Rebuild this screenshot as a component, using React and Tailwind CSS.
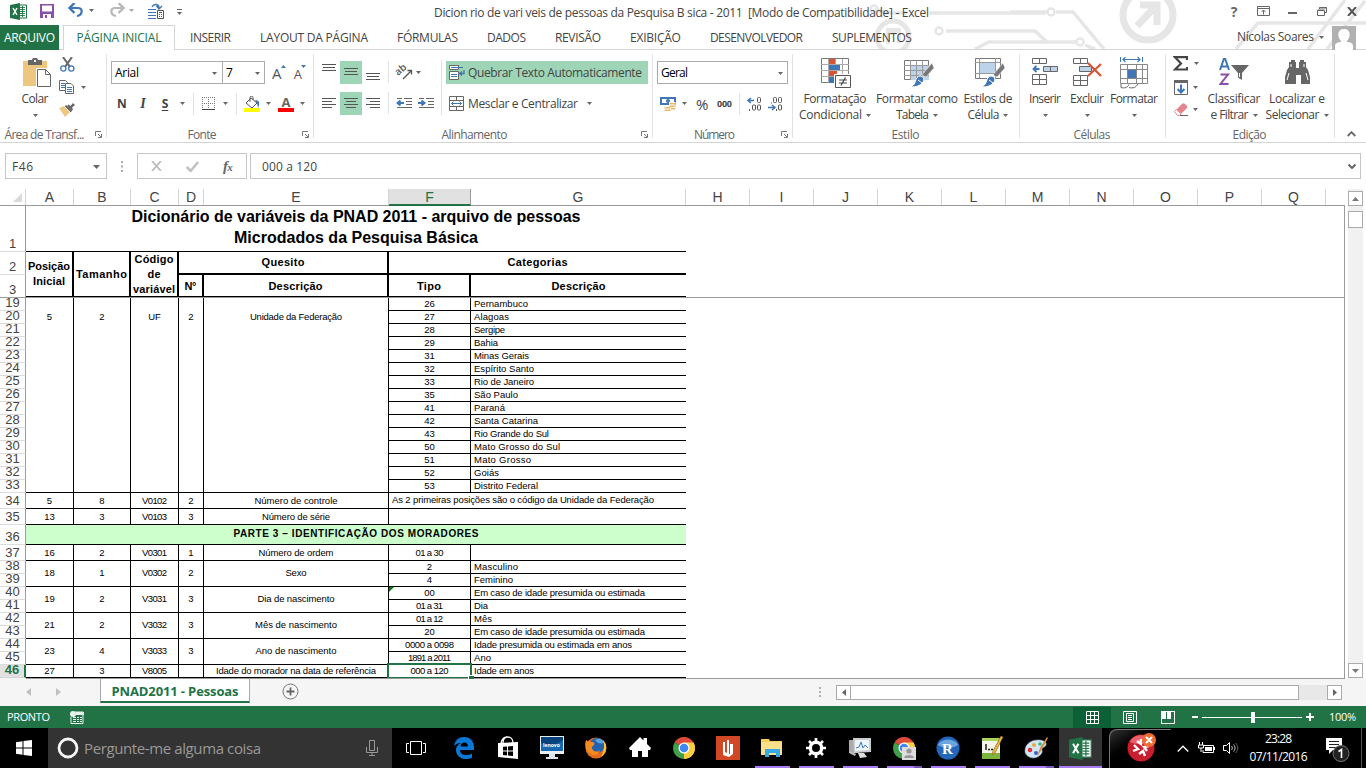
import React, { useLayoutEffect, useRef, useState } from "react";

/* Text set to a given line width by spacing its letters. */
function Fit({ w, className = "", children }) {
  const ref = useRef(null);
  const [ls, setLs] = useState(0);
  useLayoutEffect(() => {
    const n = String(children).length;
    if (n > 1) setLs((w - ref.current.getBoundingClientRect().width) / (n - 1));
  }, [w, children]);
  return (
    <span ref={ref} className={"inline-block whitespace-pre " + className} style={{ letterSpacing: ls + "px", marginRight: -ls + "px" }}>
      {children}
    </span>
  );
}

const Svg = ({ w, h, className = "", children }) => (
  <svg width={w} height={h} viewBox={`0 0 ${w} ${h}`} fill="none" className={"block shrink-0 " + className}>
    {children}
  </svg>
);

const Ar = ({ className = "", c = "#666" }) => (
  <Svg w={5} h={3} className={className}><path d="M0 0h5L2.500 3z" fill={c} /></Svg>
);

const VSep = ({ className = "" }) => <div className={"w-px shrink-0 bg-[#e1e1e1] " + className} />;

const Launcher = () => (
  <Svg w={7} h={7}><path d="M.5 5V.5H6M3 3l3 3M6.500 3v3.500H3" stroke="#777" /></Svg>
);

function Group({ width, label, lw, launch, center = "", children }) {
  return (
    <div className={"flex h-[92px] shrink-0 " + width}>
      <div className="flex min-w-0 flex-1 flex-col">
        <div className="flex h-[76px]">{children}</div>
        <div className="flex h-[16px] items-center">
          <div className={"flex-1 pt-px text-center text-[#666] " + center}><Fit w={lw}>{label}</Fit></div>
          <div className="w-[11px] pt-px">{launch && <Launcher />}</div>
        </div>
      </div>
      <VSep className="mt-1 h-[84px]" />
    </div>
  );
}

function Big({ width, icon, l1, w1, l2, w2, className = "" }) {
  return (
    <div className={"flex shrink-0 flex-col items-center pt-2 " + width + " " + className}>
      <div className="flex h-[33px] items-start justify-center">{icon}</div>
      <div className="h-4 leading-4"><Fit w={w1}>{l1}</Fit></div>
      <div className="flex h-4 items-center gap-1 leading-4">
        {l2 && <Fit w={w2}>{l2}</Fit>}
        <Ar />
      </div>
    </div>
  );
}

/* ---------- ribbon icons ---------- */
const XlIcon = ({ w = 17, h = 17 }) => (
  <svg width={w} height={h} viewBox="0 0 17 17" className="block shrink-0">
    <path d="M9 2h7.500v13H9z" fill="#fff" stroke="#217346" />
    <path d="M10 4.500h5M10 6.500h5M10 8.500h5M10 10.500h5M10 12.500h5M12.500 3v11" stroke="#217346" strokeWidth=".9" />
    <path d="M0 2 10 0v17L0 15z" fill="#217346" />
    <path d="M3 5l4 7M7 5l-4 7" stroke="#fff" strokeWidth="1.500" />
  </svg>
);
const Save = () => (
  <Svg w={14} h={14}><path d="M0 0h14v14H0z" fill="#8a4fa8" /><path d="M2 1.500h10v6H2zM3 10h8v4H3z" fill="#fff" /><path d="M5 11h2v3H5z" fill="#8a4fa8" /></Svg>
);
const Undo = ({ c, flip }) => (
  <Svg w={16} h={14} className={flip ? "-scale-x-100" : ""}><path d="M2 5h8c5 0 5 7-1 8" stroke={c} strokeWidth="2.200" /><path d="M6.500 0 1.500 5l5 5" stroke={c} strokeWidth="2.400" /></Svg>
);
const CalcQ = () => (
  <Svg w={16} h={16}><path d="M0 6.500h8M0 9.500h8M0 12.500h8M0 15.500h8" stroke="#3f76b5" /><path d="M4 4c2-4 7-3 7 1M8.500 3 11 6l3-3" stroke="#3f76b5" strokeWidth="1.400" /><path d="M9.500 7.500h6v8h-6z" stroke="#555" fill="#fff" /><path d="M11 9.500h3M11 11.500h1m1 0h1M11 13.500h1m1 0h1" stroke="#555" /></Svg>
);
const Paste = () => (
  <Svg w={29} h={30}><path d="M0 3h24v25H0z" fill="#edc77f" /><path d="M5 2h4c0-3 6-3 6 0h4v5H5z" fill="#666" /><path d="M11 2h2v2h-2z" fill="#fff" /><path d="M13 10h10l6 6v14H13z" fill="#fff" /><path d="M14.500 11.500h8l5 5v12h-13zM22.500 11.500v5h5" stroke="#666" fill="#fff" /></Svg>
);
const Cut = () => (
  <Svg w={15} h={15}><path d="M3 0l7 10M12 0L5 10" stroke="#666" strokeWidth="2" /><circle cx="3.300" cy="11.500" r="2.600" stroke="#3f76b5" strokeWidth="1.300" /><circle cx="11.300" cy="11.500" r="2.600" stroke="#3f76b5" strokeWidth="1.300" /></Svg>
);
const Copy = () => (
  <Svg w={16} h={14}><path d="M.5.5h6l2 2v8h-8z" stroke="#666" fill="#fff" /><path d="M2 3.500h4M2 5.500h4M2 7.500h4" stroke="#3f76b5" /><path d="M6.500 3.500h5.500l2.500 2.500v7.500h-8z" stroke="#666" fill="#fff" /><path d="M8 7.500h5M8 9.500h5M8 11.500h5" stroke="#3f76b5" /></Svg>
);
const Brush = () => (
  <Svg w={16} h={15}><path d="M0 6l5-2 6 6-5 5z" fill="#edc77f" /><path d="M5.500 4.500 7 3l6 6-1.500 1.500z" fill="#666" /><path d="M8 4 9.500 2.500l2 1.500L14 1l2 2-3 2.500 1 2L12.500 9z" fill="#666" /><path d="M5 4l6.500 6.500" stroke="#fff" strokeWidth=".8" /></Svg>
);
const Lines = ({ rows, h = 14 }) => (
  <Svg w={14} h={h}>{rows.map(([x, y, l], i) => <path key={i} d={`M${x} ${y + 0.5}h${l}`} stroke="#555" />)}</Svg>
);
const Indent = ({ right }) => (
  <Svg w={16} h={11}><path d="M8 .5h8M10 3.500h6M10 6.500h6M1 .5h5M1 9.500h15" stroke="#666" />{right ? <path d="M0 5h6M3.500 2.500 6.500 5 3.500 7.500" stroke="#3f76b5" strokeWidth="2" /> : <path d="M2 5h6M4.500 2.500 1.500 5l3 2.500" stroke="#3f76b5" strokeWidth="2" />}</Svg>
);
const Wrap = () => (
  <Svg w={16} h={16}><path d="M.5.5h9v4h-9zM.5 6.500h9v8h-9z" stroke="#666" fill="#fff" /><path d="M2 2.500h12M2 9.500h6M2 11.500h6" stroke="#3f76b5" /><path d="M15 5v3.500h-4M13 6.500l-2.500 2 2.500 2" stroke="#3f76b5" strokeWidth="1.300" /></Svg>
);
const Merge = () => (
  <Svg w={15} h={15}><path d="M.5.5h14v14H.5zM.5 4.500h14M.5 10.500h14M7.500.5v4M7.500 10.500v4" stroke="#666" /><path d="M2.500 7.500h10M4.500 5.500l-2 2 2 2M10.500 5.500l2 2-2 2" stroke="#3f76b5" /></Svg>
);
const BordersI = () => (
  <Svg w={13} h={13}><path d="M0 .5h13M0 6.500h13M.5 0v12M6.500 0v12M12.500 0v12" stroke="#777" strokeDasharray="1 1" /><path d="M0 12.500h13" stroke="#444" /></Svg>
);
const Bucket = () => (
  <Svg w={16} h={16}><path d="M2 7l5-5 6 5-5 5z" stroke="#555" fill="#fff" /><path d="M6 6V1.500C6-.2 9-.2 9 1.500V4" stroke="#555" /><path d="M11 4c5 0 5 4 3 8l-1-5z" fill="#3f76b5" /><path d="M0 12h16v4H0z" fill="#ff0" /></Svg>
);
const Money = () => (
  <Svg w={16} h={16}><path d="M0 1h16v8H0z" fill="#3f76b5" /><path d="M2 3h12v4H2z" fill="#fff" /><circle cx="8" cy="5" r="2" fill="#3f76b5" /><path d="M9 6h6.500v8H9zM4 10h7v6H4z" fill="#fff" /><path d="M9.500 7h6v1.500h-6zM9.500 9.500h6V11h-6zM11 12h4.500v1.500H11zM4.500 11h6v1.500h-6zM4.500 13.500h6V15h-6z" fill="#e9b767" /></Svg>
);
const Dec = ({ less }) => (
  <Svg w={16} h={14}>
    {less ? <path d="M0 10.500h6M4 8l3 2.500L4 13" stroke="#3f76b5" strokeWidth="1.500" /> : <path d="M1 3.500h6M4 1 1 3.500 4 6" stroke="#3f76b5" strokeWidth="1.500" />}
    {less && <path d="M3.500 6.500v-1" stroke="#555" />}
    {less && <rect x="5.500" y=".5" width="3" height="5" rx="1" stroke="#555" />}
    <rect x="10.500" y=".5" width="3" height="5" rx="1" stroke="#555" />
    {!less && <rect x="5.500" y="8" width="3" height="5" rx="1" stroke="#555" />}
    <rect x="10.500" y="8" width="3" height="5" rx="1" stroke="#555" />
    <path d={less ? "M8.500 12v2" : "M2.500 12v2"} stroke="#555" />
  </Svg>
);
const CondFmt = () => (
  <Svg w={30} h={30}><path d="M.5.5h27v24H.5z" fill="#fff" stroke="#777" /><path d="M7.500 1v24M14.500 1v24M21.500 1v24M0 6.500h28M0 12.500h28M0 18.500h28" stroke="#aaa" /><path d="M8 1h6v5H8zM8 13h8v5H8z" fill="#d65532" /><path d="M8 7h11v5H8zM8 19h6v6H8z" fill="#3f76b5" /><path d="M13 16h17v14H13z" fill="#fff" /><path d="M14.500 17.500h15v12h-15z" fill="#fff" stroke="#555" /><path d="M18 22h8M18 25h8M24.500 19.500l-4.500 8" stroke="#444" strokeWidth="1.200" /></Svg>
);
const TableFmt = () => (
  <Svg w={30} h={30}><path d="M.5 2.500h24v19H.5z" fill="#fff" stroke="#777" /><path d="M7 8h18v14H7z" fill="#bcd3ea" /><path d="M6.500 2v20M12.500 2v20M18.500 2v20M0 7.500h25M0 12.500h25M0 17.500h25" stroke="#999" /><path d="M28 5l2 5-8 9-4-2z" fill="#777" stroke="#fff" strokeWidth=".5" /><path d="M16 18c3 0 5 3 3 6-3 4-7 5-12 5 3-2 4-4 4.500-6s2-5 4.500-5z" fill="#3f76b5" stroke="#fff" /><path d="M14 22l4 3" stroke="#fff" /></Svg>
);
const CellSty = () => (
  <Svg w={30} h={30}><path d="M.5.5h25v20H.5z" fill="#fff" stroke="#777" /><path d="M5 5h15v10H5z" fill="#bcd3ea" /><path d="M4.500 0v20M20.500 0v20M0 4.500h26M0 15.500h26" stroke="#999" /><path d="M28 5l2 5-8 9-4-2z" fill="#777" stroke="#fff" strokeWidth=".5" /><path d="M16 18c3 0 5 3 3 6-3 4-7 5-12 5 3-2 4-4 4.500-6s2-5 4.500-5z" fill="#3f76b5" stroke="#fff" /><path d="M14 22l4 3" stroke="#fff" /></Svg>
);
const Ins = () => (
  <Svg w={27} h={28}><path d="M.5.500h14v5H.5zM7.500.5v5M.5 16.500h14v10H.5zM7.500 16.500v10M.5 21.500h14" stroke="#666" /><path d="M11.500 8.500h14v5h-14zM18.500 8.500v5" stroke="#666" fill="#bcd3ea" /><path d="M1.500 11h6M4.500 8l-3 3 3 3" stroke="#3f76b5" strokeWidth="1.800" /></Svg>
);
const Del = () => (
  <Svg w={29} h={28}><path d="M.5.500h14v5H.5zM7.500.5v5M.5 17.500h14v10H.5zM7.500 17.500v10M.5 22.500h14" stroke="#666" /><path d="M6.500 8.500h12v5h-12z" stroke="#666" fill="#bcd3ea" /><path d="M15 5l13 13M28 6L15 18" stroke="#d65532" strokeWidth="2.200" /></Svg>
);
const FmtI = () => (
  <Svg w={28} h={32}><path d="M.5 0v5M22.500 0v5" stroke="#3f76b5" /><path d="M3 2.500h17M5.500 0 3 2.500 5.500 5M17.500 0 20 2.500 17.500 5" stroke="#3f76b5" strokeWidth="1.200" /><path d="M.5 7.500h27v19H.5zM7.500 7v20M16.500 7v20M22.500 7v20M0 12.500h28M0 21.500h28" stroke="#888" /><path d="M8 13h8v8H8z" fill="#3f76b5" /><path d="M1 27v3.500c3 1 7 0 8-3M9 30.500c4 1 7 0 9-3.500" stroke="#666" /></Svg>
);
const SumI = () => <Svg w={15} h={15}><path d="M14 4V1.200H2L8 7.500 2 13.500h12.200V11" stroke="#444" strokeWidth="2.200" /></Svg>;
const FillI = () => <Svg w={14} h={15}><path d="M.5.5h13v14H.5z" stroke="#666" fill="#fff" /><path d="M0 0h14v3H0z" fill="#666" /><path d="M7 4.500v8M3.500 9 7 12.500 10.500 9" stroke="#3f76b5" strokeWidth="2" /></Svg>;
const Eraser = () => <Svg w={15} h={13}><path d="M2.500 6.500 8 1c1-1 2-1 3 0l1.500 1.500c1 1 1 2 0 3L7.500 10.500z" fill="#e5848f" /><path d="M.5 8.500 2.500 6.500l4.500 4.500-1.500 1.500h-2z" fill="#fff" stroke="#e5848f" /><path d="M6 12.500h8" stroke="#666" /></Svg>;
const SortI = () => (
  <Svg w={30} h={28}><path d="M1 12 4.800 1h1.400L10 12M2.500 8.500h6" stroke="#3f76b5" strokeWidth="2" /><path d="M1.500 16.500h7.500L1.500 26h8" stroke="#8a4fa8" strokeWidth="2" /><path d="M12 7h18l-7 8v7l-4-2.500V15z" fill="#666" /><path d="M20.500 15v4" stroke="#fff" /></Svg>
);
const Binoc = () => (
  <Svg w={27} h={25}><path d="M5 2h2V0h4v2h1v6h3V2h1V0h4v2h2v5l2 3 2 7v7h-9v-9h-5v9H1v-7l2-7 2-3z" fill="#666" /><path d="M7 4v3M22 13l2 7M3 20l2-7M20 4v3" stroke="#fff" strokeWidth="1" /></Svg>
);

/* ---------- title bar and tabs ---------- */
function Circuit() {
  return (
    <svg width="496" height="49" viewBox="870 0 496 49" fill="none" stroke="#e6e6e6" className="absolute top-0 right-0">
      <path d="M929 13h116M875 9l12 4h20M1056 12h17l31 37M1010 12h40M946 31h89l12 11h33M975 49l14-7h88M1085 45l10 4" strokeWidth="3.500" />
      <circle cx="939" cy="31" r="3.500" strokeWidth="2.500" fill="#fff" />
      <circle cx="874" cy="9" r="3.500" strokeWidth="2.500" />
      <circle cx="1051" cy="12" r="3.500" strokeWidth="2.500" fill="#fff" />
      <circle cx="1080" cy="42" r="3.500" strokeWidth="2.500" fill="#fff" />
      <circle cx="893" cy="37" r="16" strokeWidth="5" />
      <path d="M886 30h13v13M888 44v-11h8" strokeWidth="4" />
      <circle cx="1148" cy="15" r="25" strokeWidth="7" />
      <path d="M1137 26l18-19M1140 5h17v20" strokeWidth="7" />
      <path d="M1236 49l22-26h108M1308 49l37-49M1327 49l38-48" strokeWidth="3.500" />
    </svg>
  );
}

const tabs = [["INSERIR", 41], ["LAYOUT DA PÁGINA", 108], ["FÓRMULAS", 61], ["DADOS", 39], ["REVISÃO", 46], ["EXIBIÇÃO", 51], ["DESENVOLVEDOR", 93], ["SUPLEMENTOS", 80]];

function Header() {
  return (
    <header className="relative h-[50px] bg-white">
      <Circuit />
      <div className="relative flex h-[25px] items-center">
        <div className="flex h-full w-[434px] items-start pt-[3px] pl-[10px]">
          <XlIcon />
          <div className="mt-px ml-[13px]"><Save /></div>
          <div className="ml-[14px]"><Undo c="#3f76b5" /></div>
          <Ar className="mt-[6px] ml-[5px]" />
          <div className="ml-[15px]"><Undo c="#b8b8b8" flip /></div>
          <Ar className="mt-[6px] ml-[4px]" c="#aaa" />
          <div className="ml-[14px]"><CalcQ /></div>
          <Svg w={5} h={6} className="mt-[6px] ml-[13px]"><path d="M0 .5h5" stroke="#666" /><path d="M0 3h5L2.500 6z" fill="#666" /></Svg>
        </div>
        <Fit w={495} className="pt-px text-[#444]">{"Dicion rio de vari veis de pessoas da Pesquisa B sica - 2011  [Modo de Compatibilidade] - Excel"}</Fit>
        <div className="ml-auto flex h-full items-start pt-[5px] pr-[9px] text-[#666]">
          <span className="w-2 text-center text-[14px] leading-[13px] font-bold">?</span>
          <Svg w={13} h={10} className="mt-px ml-[19px]"><path d="M.5.5h12v9H.5zM.5 2.500h12M6.500 8.500v-4M4.500 6l2-2 2 2" stroke="#666" /></Svg>
          <div className="mt-[7px] ml-[18px] h-[2px] w-[9px] bg-[#666]" />
          <Svg w={10} h={9} className="mt-[2px] ml-[20px]"><path d="M2.500 2V.5h7v5H8M.5 3.500h7v5h-7zM.5 3h7M2 1h8" stroke="#666" /></Svg>
          <Svg w={10} h={9} className="mt-[2px] ml-[20px]"><path d="M1 0l8 9M9 0L1 9" stroke="#555" strokeWidth="2" /></Svg>
        </div>
      </div>
      <nav className="relative flex h-[25px] text-[#444]">
        <div className="flex h-[25px] w-[59px] items-center justify-center bg-[#217346] text-white"><Fit w={51}>ARQUIVO</Fit></div>
        <div className="w-1 border-b border-[#d4d4d4]" />
        <div className="flex w-[112px] items-center justify-center border-x border-t border-[#d4d4d4] bg-white text-[#217346]"><Fit w={85}>PÁGINA INICIAL</Fit></div>
        <div className="flex flex-1 items-center border-b border-[#d4d4d4] pt-px pl-[15px]">
          <div className="flex gap-[29px]">{tabs.map(([t, w]) => <Fit key={t} w={w}>{t}</Fit>)}</div>
          <Fit w={77} className="-mt-px ml-[325px]">Nícolas Soares</Fit>
          <Ar className="ml-[5px]" />
          <Svg w={24} h={24} className="ml-[8px]"><path d="M0 0h24v24H0z" fill="#b1b1b1" /><path d="M3 24v-4c0-3 3-4 6-4v-1c-4-4-4-12 3-12s7 8 3 12v1c3 0 6 1 6 4v4z" fill="#fff" /></Svg>
        </div>
      </nav>
    </header>
  );
}

/* ---------- ribbon ---------- */
function Ribbon() {
  return (
    <div className="flex h-[93px] border-b border-[#d4d4d4] bg-white text-[#444]">
      <Group width="w-[107px]" label="Área de Transf..." lw={80} launch center="-ml-[6px]">
        <Big className="ml-[6px]" width="w-[58px]" icon={<div className="pl-1"><Paste /></div>} l1="Colar" w1={27} />
        <div className="flex flex-col pt-[7px]">
          <div className="-ml-[4px]"><Cut /></div>
          <div className="mt-[8px] -ml-[5px] flex items-center"><Copy /><Ar className="ml-[6px]" /></div>
          <div className="mt-[8px] -ml-[5px]"><Brush /></div>
        </div>
      </Group>

      <Group width="w-[207px]" label="Fonte" lw={29} launch center="pr-[5px]">
        <div className="flex flex-col pt-[11px] pl-1">
          <div className="flex h-[23px]">
            <div className="flex w-[112px] items-center justify-between border border-[#ababab] pt-px pr-[5px] pl-[3px] text-black"><Fit w={24}>Arial</Fit><Ar /></div>
            <div className="-ml-px flex w-[43px] items-center justify-between border border-[#ababab] pt-px pr-[4px] pl-[3px] text-black">7<Ar /></div>
            <div className="ml-[7px] flex text-[#555]"><span className="pt-[2px] text-[15px] leading-5 tracking-tighter">A</span><Ar className="mt-[4px] -scale-y-100" c="#3f76b5" /></div>
            <div className="ml-[8px] flex text-[#555]"><span className="pt-[3px] text-[13px] leading-5 tracking-tighter">A</span><Ar className="mt-[4px]" c="#3f76b5" /></div>
          </div>
          <div className="mt-[8px] flex h-[23px] items-center text-[12px]">
            <span className="w-[22px] text-center font-bold">N</span>
            <span className="w-[20px] text-center font-['Liberation_Serif',serif] text-[14px] font-bold italic">I</span>
            <span className="ml-[3px] w-[18px] text-center font-bold underline underline-offset-2">S</span>
            <Ar className="ml-[6px]" /><VSep className="ml-[8px] h-[22px]" />
            <div className="ml-[8px]"><BordersI /></div><Ar className="ml-[8px]" /><VSep className="ml-[8px] h-[22px]" />
            <div className="ml-[7px]"><Bucket /></div><Ar className="ml-[6px]" />
            <div className="ml-[7px] w-4 text-center"><div className="h-[12px] text-[13px] leading-[12px] font-bold text-[#666]">A</div><div className="h-1 bg-[#f00]" /></div>
            <Ar className="ml-[6px]" />
          </div>
        </div>
      </Group>

      <Group width="w-[339px]" label="Alinhamento" lw={66} launch center="pl-[4px] pr-[10px]">
        <div className="flex flex-col pt-[11px] pl-[4px]">
          <div className="flex h-[23px]">
            <div className="w-[22px] px-1 pt-[3px]"><Lines rows={[[0, 0, 14], [1, 3, 12], [0, 6, 14]]} /></div>
            <div className="w-[22px] bg-[#9fd5b7] px-1 pt-[7px]"><Lines rows={[[0, 0, 14], [1, 3, 12], [0, 6, 14]]} /></div>
            <div className="w-[22px] px-1 pt-[12px]"><Lines h={9} rows={[[0, 0, 14], [1, 3, 12], [0, 6, 14]]} /></div>
            <VSep className="ml-[4px] h-[22px]" />
            <Svg w={18} h={19} className="mt-px ml-[6px] overflow-visible"><text x="3" y="14" fontSize="10" fontWeight="600" fill="#555" fontFamily="Open Sans, sans-serif" transform="rotate(-40 3 14)">ab</text><path d="M8 17l8-8M12.500 8.500h4v4" stroke="#555" strokeWidth="1.300" /></Svg>
            <Ar className="mt-[10px] ml-[3px]" />
          </div>
          <div className="mt-[8px] flex h-[23px]">
            <div className="w-[22px] px-1 pt-[6px]"><Lines rows={[[0, 0, 14], [0, 3, 10], [0, 6, 14], [0, 9, 10]]} /></div>
            <div className="w-[22px] bg-[#9fd5b7] px-1 pt-[6px]"><Lines rows={[[0, 0, 14], [2, 3, 10], [0, 6, 14], [2, 9, 10]]} /></div>
            <div className="w-[22px] px-1 pt-[6px]"><Lines rows={[[0, 0, 14], [4, 3, 10], [0, 6, 14], [4, 9, 10]]} /></div>
            <VSep className="ml-[4px] h-[22px]" />
            <div className="mt-[6px] ml-[7px]"><Indent /></div>
            <div className="mt-[6px] ml-[6px]"><Indent right /></div>
          </div>
        </div>
        <VSep className="mt-[10px] ml-[7px] h-[55px]" />
        <div className="flex flex-col pt-[11px] pl-[4px]">
          <div className="flex h-[23px] w-[202px] items-center bg-[#9fd5b7] pl-[3px]"><Wrap /><Fit w={174} className="mt-px ml-[3px]">Quebrar Texto Automaticamente</Fit></div>
          <div className="mt-[8px] flex h-[23px] items-center pl-[3px]"><Merge /><Fit w={110} className="mt-px ml-[4px]">Mesclar e Centralizar</Fit><Ar className="ml-[9px]" /></div>
        </div>
      </Group>

      <Group width="w-[140px]" label="Número" lw={41} launch center="pl-[6px] pr-[11px]">
        <div className="flex flex-col pt-[11px] pl-[4px]">
          <div className="flex h-[23px] w-[131px] items-center justify-between border border-[#ababab] px-[3px] pt-px text-black"><Fit w={27}>Geral</Fit><Ar className="mr-px" /></div>
          <div className="mt-[8px] flex h-[23px] items-center pl-[3px]">
            <Money /><Ar className="ml-[6px]" />
            <span className="ml-[9px] w-[13px] text-[15px]">%</span>
            <Fit w={15} className="ml-[8px] text-[9px] font-bold">000</Fit>
            <VSep className="ml-[7px] h-[22px]" />
            <div className="ml-[7px]"><Dec /></div><div className="ml-[5px]"><Dec less /></div>
          </div>
        </div>
      </Group>

      <Group width="w-[227px]" label="Estilo" lw={28} center="pl-[10px]">
        <Big className="ml-[2px]" width="w-[80px]" icon={<div className="pl-px"><CondFmt /></div>} l1="Formatação" w1={63} l2="Condicional" w2={63} />
        <Big width="w-[84px]" icon={<div className="pl-1"><TableFmt /></div>} l1="Formatar como" w1={82} l2="Tabela" w2={33} />
        <Big width="w-[58px]" icon={<div className="pl-1"><CellSty /></div>} l1="Estilos de" w1={49} l2="Célula" w2={32} />
      </Group>

      <Group width="w-[146px]" label="Células" lw={37} center="pl-[10px]">
        <Big className="ml-[4px]" width="w-[42px]" icon={<Ins />} l1="Inserir" w1={32} />
        <Big width="w-[42px]" icon={<Del />} l1="Excluir" w1={34} />
        <Big width="w-[52px]" icon={<div className="-mt-px"><FmtI /></div>} l1="Formatar" w1={48} />
      </Group>

      <Group width="w-[169px]" label="Edição" lw={34} center="pl-[10px]">
        <div className="flex w-[37px] flex-col pt-[6px] pl-[7px]">
          <div className="flex items-center"><SumI /><Ar className="ml-[6px]" /></div>
          <div className="mt-[9px] flex items-center pl-px"><FillI /><Ar className="ml-[5px]" /></div>
          <div className="mt-[8px] flex items-center pl-px"><Eraser /><Ar className="ml-[4px]" /></div>
        </div>
        <Big width="w-[60px]" className="ml-px" icon={<SortI />} l1="Classificar" w1={53} l2="e Filtrar" w2={38} />
        <Big width="w-[66px]" icon={<div className="pt-[2px]"><Binoc /></div>} l1="Localizar e" w1={56} l2="Selecionar" w2={54} />
      </Group>
      <Svg w={9} h={6} className="mt-[81px] ml-[12px]"><path d="M.7 5l3.800-3.800L8.300 5" stroke="#666" strokeWidth="1.800" /></Svg>
    </div>
  );
}

function FormulaBar() {
  return (
    <div className="flex h-[46px] items-start bg-white pt-[10px] pl-[5px] text-[#444]">
      <div className="flex h-[26px] w-[102px] items-center justify-between border border-[#c6c6c6] pt-px pr-[6px] pl-[6px]">
        <Fit w={21}>F46</Fit><Svg w={7} h={4}><path d="M0 0h7L3.500 4z" fill="#666" /></Svg>
      </div>
      <Svg w={2} h={11} className="mt-[8px] ml-[14px]"><path d="M0 0h2v2H0zM0 4.500h2v2H0zM0 9h2v2H0z" fill="#aaa" /></Svg>
      <div className="ml-[14px] flex h-[26px] w-[110px] items-center border border-[#c6c6c6] pl-[13px]">
        <Svg w={11} h={10}><path d="M1 0l9 10M10 0L1 10" stroke="#bbb" strokeWidth="1.800" /></Svg>
        <Svg w={13} h={11} className="ml-[24px]"><path d="M.7 6l4 4L12 1" stroke="#c0c0c0" strokeWidth="2.500" /></Svg>
        <span className="ml-[24px] font-['Liberation_Serif',serif] text-[15px] leading-none font-bold tracking-tighter text-[#666] italic">f<span className="text-[11px]">x</span></span>
      </div>
      <div className="ml-[3px] flex h-[26px] w-[1111px] items-center justify-between border border-[#c6c6c6] pt-px pr-[4px] pl-[11px]">
        <Fit w={55}>000 a 120</Fit>
        <Svg w={8} h={5}><path d="M.5.5L4 4 7.500.5" stroke="#666" strokeWidth="2" /></Svg>
      </div>
    </div>
  );
}

/* ---------- sheet ---------- */
const rowHeads = [
  ["1", "h-[46px]"], ["2", "h-[23px]"], ["3", "h-[23px]"],
  ...Array.from({ length: 15 }, (_, i) => [String(19 + i), "h-[13px]"]),
  ["34", "h-[16px]"], ["35", "h-[16px]"], ["36", "h-[20px]"], ["37", "h-[16px]"],
  ...Array.from({ length: 9 }, (_, i) => [String(38 + i), "h-[13px]"]),
];
const lead = [["A", "w-[48px]"], ["B", "w-[57px]"], ["C", "w-[48px]"], ["D", "w-[25px]"], ["E", "w-[185px]"], ["F", "w-[82px]"], ["G", "w-[215px]"], ...["H", "I", "J", "K", "L", "M", "N", "O", "P", "Q"].map((l) => [l, "w-[64px]"])];

const states = [["26", "Pernambuco", 54], ["27", "Alagoas", 35], ["28", "Sergipe", 31], ["29", "Bahia", 24], ["31", "Minas Gerais", 55], ["32", "Espírito Santo", 60], ["33", "Rio de Janeiro", 60], ["35", "São Paulo", 44], ["41", "Paraná", 31], ["42", "Santa Catarina", 64], ["43", "Rio Grande do Sul", 75], ["50", "Mato Grosso do Sul", 86], ["51", "Mato Grosso", 57], ["52", "Goiás", 25], ["53", "Distrito Federal", 64]];

const cw = ["w-[48px]", "w-[57px]", "w-[48px]", "w-[25px]", "w-[185px]"];
function Block({ h, left, ew, right, rh = "h-[13px]", top = false, joined = false }) {
  return (
    <div className={"flex " + h}>
      {left.map((t, i) => (
        <div key={i} className={"flex shrink-0 justify-center border-r border-b border-black " + cw[i] + (top ? " items-start pt-[13px]" : h === "h-[26px]" ? " items-center pb-[2px]" : " items-center")}>
          {t && (i === 4 ? <Fit w={ew}>{t}</Fit> : i === 2 && t.length > 2 ? <Fit w={25}>{t}</Fit> : <span>{t}</span>)}
        </div>
      ))}
      <div>
        {right.map(([a, b, bw, aw], i) =>
          joined ? (
            <div key={i} className={"flex w-[297px] items-center border-b border-black pb-px pl-[3px] " + rh}>{b && <Fit w={bw}>{b}</Fit>}</div>
          ) : (
            <div key={i} className={"flex border-b border-black " + rh}>
              <div className="flex w-[82px] items-center justify-center border-r border-black">{aw ? <Fit w={aw}>{a}</Fit> : a}</div>
              <div className="flex w-[215px] items-center pl-[3px]">{b && <Fit w={bw}>{b}</Fit>}</div>
            </div>
          )
        )}
      </div>
    </div>
  );
}

const H = ({ className, children }) => <div className={"flex shrink-0 items-center justify-center border-black " + className}>{children}</div>;

function Sheet() {
  return (
    <div className="flex h-[489px] bg-white font-['Liberation_Sans',Arial,sans-serif]">
      <div className="flex w-[1345px] flex-col">
        <div className="flex h-[17px] shrink-0 border-b border-[#9b9b9b] text-[14px] leading-[16px] text-[#444]">
          <div className="flex w-[26px] justify-end border-r border-[#d4d4d4] pt-[4px] pr-[3px]"><Svg w={9} h={9}><path d="M9 0v9H0z" fill="#dadada" /></Svg></div>
          {lead.map(([l, w]) => (
            <div key={l} className={"text-center " + w + (l === "F" ? " -mb-px border-r border-b-2 border-r-[#9b9b9b] border-b-[#217346] bg-[#e1e1e1] text-[#217346]" : " border-r border-[#d4d4d4]")}>{l}</div>
          ))}
        </div>
        <div className="flex h-[473px] border-r border-[#9b9b9b]">
          <div className="w-[26px] text-[13px] leading-[10px] text-[#444]">
            {rowHeads.map(([n, h]) => (
              <div key={n} className={"flex items-end justify-center border-r border-b pb-[2px] " + h + (n === "46" ? " border-r-2 border-r-[#217346] border-b-[#d4d4d4] bg-[#e1e1e1] font-bold text-[#217346]" : n === "3" ? " border-[#9b9b9b]" : " border-r-[#9b9b9b] border-b-[#dcdcdc]")}>{n}</div>
            ))}
          </div>
          <div className="relative flex-1 text-[9.5px] leading-[12px] text-black">
            <div className="flex h-[46px] w-[660px] flex-col items-center border-b border-black text-[16px] leading-[21px] font-bold">
              <Fit w={449}>Dicionário de variáveis da PNAD 2011 - arquivo de pessoas</Fit>
              <Fit w={244}>Microdados da Pesquisa Básica</Fit>
            </div>
            <div className="flex h-[45px] w-[660px] border-b border-black text-[11px] leading-[15px] font-bold">
              <H className="w-[48px] flex-col border-r-2"><Fit w={42}>Posição</Fit><Fit w={32}>Inicial</Fit></H>
              <H className="w-[57px] border-r-2"><Fit w={51}>Tamanho</Fit></H>
              <H className="w-[48px] flex-col border-r-2"><Fit w={39}>Código</Fit><Fit w={13}>de</Fit><Fit w={42}>variável</Fit></H>
              <div>
                <H className="h-[23px] w-[210px] border-r-2 border-b-2"><Fit w={43}>Quesito</Fit></H>
                <div className="flex h-[21px]"><H className="w-[25px] border-r-2 pt-px"><Fit w={12}>N°</Fit></H><H className="w-[185px] border-r-2 pt-px"><Fit w={54}>Descrição</Fit></H></div>
              </div>
              <div>
                <H className="h-[23px] w-[297px] border-b-2"><Fit w={60}>Categorias</Fit></H>
                <div className="flex h-[21px]"><H className="w-[82px] border-r-2 pt-px"><Fit w={24}>Tipo</Fit></H><H className="w-[215px] pt-px"><Fit w={54}>Descrição</Fit></H></div>
              </div>
            </div>
            <div className="h-px bg-[#9b9b9b]" />
            <Block h="h-[195px]" top left={["5", "2", "UF", "2", "Unidade da Federação"]} ew={92} right={states} />
            <Block h="h-[16px]" rh="h-[16px]" joined left={["5", "8", "V0102", "2", "Número de controle"]} ew={83} right={[["", "As 2 primeiras posições são o código da Unidade da Federação", 262]]} />
            <Block h="h-[16px]" rh="h-[16px]" joined left={["13", "3", "V0103", "3", "Número de série"]} ew={68} right={[["", ""]]} />
            <div className="flex h-[20px] w-[660px] items-center justify-center border-b border-black bg-[#cfc] pb-px text-[10px] font-bold"><Fit w={245}>PARTE 3 – IDENTIFICAÇÃO DOS MORADORES</Fit></div>
            <Block h="h-[16px]" rh="h-[16px]" left={["16", "2", "V0301", "1", "Número de ordem"]} ew={75} right={[["01 a 30", "", 0, 28]]} />
            <Block h="h-[26px]" left={["18", "1", "V0302", "2", "Sexo"]} ew={21} right={[["2", "Masculino", 44], ["4", "Feminino", 39]]} />
            <Block h="h-[26px]" left={["19", "2", "V3031", "3", "Dia de nascimento"]} ew={77} right={[["00", "Em caso de idade presumida ou estimada", 171], ["01 a 31", "Dia", 14, 27]]} />
            <Block h="h-[26px]" left={["21", "2", "V3032", "3", "Mês de nascimento"]} ew={82} right={[["01 a 12", "Mês", 18, 27], ["20", "Em caso de idade presumida ou estimada", 171]]} />
            <Block h="h-[26px]" left={["23", "4", "V3033", "3", "Ano de nascimento"]} ew={81} right={[["0000 a 0098", "Idade presumida ou estimada em anos", 158, 49], ["1891 a 2011", "Ano", 17, 43]]} />
            <Block h="h-[13px]" left={["27", "3", "V8005", "", "Idade do morador na data de referência"]} ew={160} right={[["000 a 120", "Idade em anos", 60, 38]]} />
            <div className="h-px bg-[#9b9b9b]" />
            <Svg w={5} h={5} className="absolute top-[381px] left-[363px]"><path d="M0 0h5L0 5z" fill="#0a7a14" /></Svg>
            <div className="absolute top-[457px] left-[361px] h-[15px] w-[85px] border-2 border-b border-[#217346]" />
            <div className="absolute top-[469px] left-[442px] h-[4px] w-[6px] border-t border-l border-white bg-[#217346]" />
          </div>
        </div>
      </div>
      <div className="ml-[3px] flex w-[15px] flex-col bg-[#f1f1f1] pt-[2px]">
        <div className="flex h-[15px] items-center justify-center border border-[#ababab] bg-white"><Svg w={7} h={4}><path d="M0 4h7L3.500 0z" fill="#777" /></Svg></div>
        <div className="mt-[5px] h-[17px] border border-[#ababab] bg-white" />
        <div className="mt-auto flex h-[15px] items-center justify-center border border-[#ababab] bg-white"><Svg w={7} h={4}><path d="M0 0h7L3.500 4z" fill="#777" /></Svg></div>
      </div>
    </div>
  );
}

function TabBar() {
  return (
    <div className="flex h-[28px] bg-[#f5f5f5]">
      <Svg w={5} h={8} className="mt-[10px] ml-[26px]"><path d="M5 0v8L0 4z" fill="#c0c0c0" /></Svg>
      <Svg w={5} h={8} className="mt-[10px] ml-[25px]"><path d="M0 0v8l5-4z" fill="#c0c0c0" /></Svg>
      <div className="ml-[39px] flex h-[25px] w-[150px] items-center justify-center border-x border-b-2 border-x-[#ababab] border-b-[#217346] bg-white pt-[2px] text-[13px] font-bold text-[#217346]"><Fit w={127}>PNAD2011 - Pessoas</Fit></div>
      <Svg w={17} h={17} className="mt-[5px] ml-[32px]"><circle cx="8.500" cy="8.500" r="7.500" stroke="#777" /><path d="M8.500 4.500v8M4.500 8.500h8" stroke="#666" strokeWidth="1.800" /></Svg>
      <Svg w={2} h={10} className="mt-[9px] ml-[520px]"><path d="M0 0h2v2H0zM0 4h2v2H0zM0 8h2v2H0z" fill="#b0b0b0" /></Svg>
      <div className="mt-[7px] ml-[15px] flex h-[15px] w-[506px] bg-[#e8e8e8]">
        <div className="flex w-[15px] items-center justify-center border border-[#ababab] bg-white"><Svg w={4} h={7}><path d="M4 0v7L0 3.500z" fill="#666" /></Svg></div>
        <div className="-ml-px w-[449px] border border-[#ababab] bg-white" />
        <div className="ml-auto flex w-[15px] items-center justify-center border border-[#ababab] bg-white"><Svg w={4} h={7}><path d="M0 0v7l4-3.500z" fill="#666" /></Svg></div>
      </div>
    </div>
  );
}

function StatusBar() {
  return (
    <div className="flex h-[22px] items-center bg-[#217346] pr-[10px] pl-[7px] text-[11px] text-white">
      <Fit w={43}>PRONTO</Fit>
      <Svg w={14} h={13} className="ml-[20px]"><path d="M5 1h8v11.500H1V6" stroke="#e6f2eb" /><path d="M6 1h8v3H6z" fill="#e6f2eb" /><circle cx="3" cy="3" r="3" fill="#e6f2eb" /><path d="M3 6.500h3m1 0h2m1 0h2M3 8.500h3m1 0h2m1 0h2M3 10.500h3m1 0h2m1 0h2" stroke="#e6f2eb" /></Svg>
      <div className="mt-px ml-auto flex h-[21px] w-[38px] items-center justify-center bg-[#0b6035]"><Svg w={13} h={13}><path d="M.5.5h12v12H.5zM4.500 0v13M8.500 0v13M0 4.500h13M0 8.500h13" stroke="#fff" /></Svg></div>
      <Svg w={14} h={13} className="ml-[12px]"><path d="M.5.5h13v12H.5z" stroke="#fff" /><path d="M3.500 2.500h7v8h-7zM5 4.500h4M5 6.500h4M5 8.500h4" stroke="#fff" /></Svg>
      <Svg w={14} h={13} className="ml-[24px]"><path d="M0 .5h14M.5 0v12.500M13.500 0v12.500H0" stroke="#fff" /><path d="M1 1h4v7H1zM6 1h4v7H6z" fill="#fff" /></Svg>
      <div className="ml-[17px] h-[2px] w-[6px] bg-white" />
      <div className="ml-[4px] flex w-[100px] items-center"><div className="h-px w-[49px] bg-white" /><div className="h-[11px] w-[4px] bg-white" /><div className="h-px flex-1 bg-white" /></div>
      <Svg w={8} h={8} className="ml-[4px]"><path d="M4 0v8M0 4h8" stroke="#fff" strokeWidth="2" /></Svg>
      <Fit w={27} className="ml-[15px]">100%</Fit>
    </div>
  );
}

/* ---------- taskbar ---------- */
const Chrome = ({ user }) => (
  <svg width="24" height="24" viewBox="0 0 24 24" className="block">
    <path d="M12 12 2.500 6.500A11 11 0 0 1 21.500 6.500z" fill="#e04a3a" />
    <path d="M12 12 21.500 6.500A11 11 0 0 1 12 23z" fill="#fbcf3b" />
    <path d="M12 12V23A11 11 0 0 1 2.500 6.500z" fill="#3f9f4a" />
    <path d="M12 6.500h9.500A11 11 0 0 1 12 23l5-8z" fill="#fbcf3b" />
    <circle cx="12" cy="12" r="5.500" fill="#fff" /><circle cx="12" cy="12" r="4.300" fill="#4285f4" />
    {user && <><path d="M10 11h14v13H10z" fill="#ddd" /><circle cx="17" cy="15" r="2.600" fill="#999" /><path d="M12 22c0-4 10-4 10 0z" fill="#999" /></>}
  </svg>
);
const icons = [
  <Svg key="edge" w={22} h={22}><path d="M1 9C2 3 6 0 11 0c6 0 10 4 10 10v3H7c0 6 8 6 12 3.500v4.300C12 24 3 21 3 13c0-4 3-6 5-7-4 0-6 2-7 3zm6.500.5H15C15 4 8 4.500 7.500 9.500z" fill="#0a78d7" /></Svg>,
  <Svg key="store" w={22} h={24}><path d="M1 7l20-1v17L1 21z" fill="#fff" /><path d="M6 7C6-1 16-1 16 7M4 7c1-4 3-6 6-6" stroke="#fff" strokeWidth="1.300" /><path d="M6 10.800l4-.3v4H6zM11 10.400l5-.4v4.500h-5zM6 15.500h4v4l-4-.5zM11 15.500h5V20l-5-.5z" fill="#000" /></Svg>,
  <Svg key="pc" w={24} h={24}><path d="M0 0h24v18H0z" fill="#e8eef2" /><path d="M1 1h22v14H1z" fill="#1467b0" /><path d="M1 7c8 4 15 2 22-3V1H1z" fill="#08427c" /><text x="3" y="11" fontSize="5" fontWeight="bold" fill="#fff">lenovo</text><path d="M9 18h6v3h3v2H6v-2h3z" fill="#dde3e8" /></Svg>,
  <Svg key="ff" w={24} h={24}><circle cx="12" cy="12" r="10.500" fill="#e56a1c" /><circle cx="13" cy="9.500" r="7.500" fill="#2462ad" /><path d="M11 4c3-2 7-1 9 2-3 3-7 1-9-2z" fill="#5aa7dd" /><path d="M2 4c1 1 3 2 6 2 2 0 3 1 2 3-2 1-3 3-1 5s5 2 7 0c-1 5-6 6-9 4-5-2-7-8-5-14z" fill="#f28b20" /><path d="M19 4c5 5 4 13-2 17 3-6 4-11 2-17z" fill="#f9c632" /></Svg>,
  <Svg key="home" w={24} h={24}><path d="M12 1l3.500 3.500V2H19v6l4 4-1 2h-2v7h-6v-6h-4v6H4v-7H2l-1-2z" fill="#fff" /></Svg>,
  <Chrome key="chrome" />,
  <Svg key="red" w={24} h={24}><path d="M0 0h24v24H0z" fill="#d24726" /><path d="M7 6h2v10l2 1V4h2v8h1V8h3v10l-4 3-6-2z" fill="#fff" /><path d="M13.500 12v6" stroke="#d24726" /></Svg>,
  <Svg key="exp" w={24} h={24}><path d="M1 3h8l1 2h12v14H1z" fill="#f7cf5a" /><path d="M1 6h21v13H1z" fill="#fbe08c" /><path d="M5 13h15v8h-4v-4H9v4H5z" fill="#33a9e8" /></Svg>,
  <Svg key="gear" w={22} h={22}><circle cx="11" cy="11" r="5.700" stroke="#fff" strokeWidth="3.400" /><path d="M11 1v4M11 17v4M1 11h4M17 11h4M4 4l3 3M15 15l3 3M4 18l3-3M15 7l3-3" stroke="#fff" strokeWidth="2.600" /></Svg>,
  <Svg key="mon" w={24} h={22}><path d="M1 3h10v13H1z" fill="#aaa" /><path d="M5 1h18v14L6 16z" fill="#ccc" /><path d="M7 3h14v10L7 14z" fill="#eef4fb" /><path d="M8 11l3-1 2-5 2 6 2-3 3 3" stroke="#3b7bd0" /><path d="M10 16h6l3 4-7 1z" fill="#ddd" /><path d="M2 14l6 3-1 2-6-3z" fill="#bbb" /></Svg>,
  <Chrome key="chromeu" user />,
  <Svg key="r" w={24} h={24}><circle cx="12" cy="12" r="11.500" fill="#2467b9" /><path d="M2 9C5 2 19 2 22 9c-6 4-14 4-20 0z" fill="#6ea4df" /><text x="6" y="17.500" fontSize="15" fill="#fff" fontFamily="Liberation Serif, serif" fontWeight="bold">R</text></Svg>,
  <Svg key="npp" w={24} h={24}><path d="M2 2h18v21H2z" fill="#f3f3ea" /><path d="M2 17h18v6H2z" fill="#7bb53b" /><path d="M2 2h18v3H2z" fill="#a8d45c" /><path d="M6 8v6M8 13.500h2m1 0h2" stroke="#222" strokeWidth="1.500" /><path d="M23 1l-8 16-3 2 1-4 8-15z" fill="#e9b93b" stroke="#8a5a12" strokeWidth=".6" /></Svg>,
  <Svg key="paint" w={24} h={24}><path d="M1 15C1 8 7 4 14 4c5 0 9 2 8 5s-5 2-4 5-2 7-8 8c-5 0-9-3-9-7z" fill="#d3e5f5" stroke="#8ab" strokeWidth=".6" /><circle cx="6" cy="14" r="2.300" fill="#d33" /><circle cx="10" cy="9" r="2" fill="#e9a93b" /><circle cx="16" cy="8" r="1.800" fill="#3b8" /><circle cx="12" cy="17" r="2" fill="#36c" /><path d="M23 1l-7 11-3 9 5-8 6-11z" fill="#d58b3b" /></Svg>,
  <XlIcon key="xl" w={23} h={23} />,
];
const running = [0, 0, 0, 0, 0, 0, 0, 1, 1, 1, 2, 1, 1, 2, 1];

function Taskbar() {
  return (
    <div className="flex h-[40px] bg-black text-white">
      <div className="flex w-[48px] items-center justify-center"><Svg w={16} h={16}><path d="M0 2.200 6.500 1.200v6.300H0zM7.500 1 16 0v7.500H7.500zM0 8.500h6.500v6.300L0 13.800zM7.500 8.500H16V16l-8.500-1z" fill="#fff" /></Svg></div>
      <div className="flex w-[344px] items-center bg-[#333] pl-[9px]">
        <Svg w={22} h={22}><circle cx="11" cy="11" r="9" stroke="#f5f5f5" strokeWidth="2.800" /></Svg>
        <Fit w={177} className="ml-[5px] text-[15px] text-[#999]">Pergunte-me alguma coisa</Fit>
        <Svg w={12} h={16} className="mr-[14px] ml-auto"><path d="M3.500.5h5v10h-5zM.5 7v5.500h11V7M6 12.500v3M3 15.500h6" stroke="#999" /></Svg>
      </div>
      <div className="mr-[2px] flex w-[48px] items-center justify-center"><Svg w={20} h={14}><path d="M4.500.5h11v13h-11zM3 2.500H.5v9H3M17 2.500h2.500v9H17" stroke="#fff" /></Svg></div>
      {icons.map((ic, i) => (
        <div key={i} className={"relative flex items-center justify-center " + (i === 14 ? "ml-px w-[43px] bg-[#333]" : "w-[44px]")}>
          {ic}
          {running[i] > 0 && <div className={"absolute bottom-0 flex h-[2px] justify-end bg-[#a97bf5] " + (i === 14 ? "w-[43px]" : "w-[35px]")}>{running[i] === 2 && <div className="h-full w-[8px] bg-[#7a54bd]" />}</div>}
        </div>
      ))}
      <div className="mt-[1px] ml-[7px] flex w-[62px] items-start rounded-tl-lg border-t border-l border-[#777] bg-linear-to-br from-[#333] to-black to-50% pt-[3px] pl-[17px]">
        <Svg w={29} h={30}><circle cx="14" cy="15" r="13.500" fill="#c81e2e" /><path d="M3 9C6 0 22 0 25 9c-7 3-15 3-22 0z" fill="#e8606a" /><path d="M14 6v5l-4-3M22 13l-5 1 3 4M18 23l-2-5-4 3M6 18l5-2-4-4" stroke="#fff" strokeWidth="2.400" /><circle cx="22" cy="7" r="7" fill="#ee6b34" /><path d="M19 4l6 6M25 4l-6 6" stroke="#fff" strokeWidth="2" /></Svg>
      </div>
      <div className="flex flex-1 items-center">
        <Svg w={12} h={7} className="ml-[6px]"><path d="M.7 6.500 6 1.200l5.300 5.300" stroke="#fff" strokeWidth="1.300" /></Svg>
        <Svg w={17} h={12} className="ml-[9px]"><path d="M6 3.500h9.500v7H5V8" stroke="#fff" /><path d="M7 5h7v4H7zM15 5h2v3h-2z" fill="#fff" /><path d="M1.500 0v3M4.500 0v3M.5 3h5v3h-5zM3 6v4" stroke="#fff" /></Svg>
        <Svg w={16} h={14} className="ml-[8px]"><path d="M.5 4.500h3l3-3v11l-3-3h-3z" stroke="#fff" /><path d="M8.500 5c1 1 1 3 0 4M10.500 3.500c2 2 2 5 0 7" stroke="#ccc" /><path d="M12.500 2c3 3 3 7 0 10" stroke="#666" /></Svg>
        <div className="ml-[10px] flex w-[59px] flex-col items-center text-[12px] leading-[18px]"><Fit w={27}>23:28</Fit><Fit w={58}>07/11/2016</Fit></div>
        <Svg w={25} h={25} className="mt-[4px] ml-[17px]"><path d="M1 0h16v12H8l-4 4v-4H1z" fill="#fff" /><path d="M4 3.500h10M4 6.500h10M4 9.500h10" stroke="#222" strokeWidth="1.200" /><circle cx="16" cy="15.500" r="8" fill="#222" stroke="#777" /><path d="M13.500 13.500 16.500 11.500V20" stroke="#fff" strokeWidth="1.600" /></Svg>
        <div className="mr-[4px] ml-auto h-full w-px bg-[#555]" />
      </div>
    </div>
  );
}

export default function App() {
  return (
    <div className="h-[768px] w-[1366px] overflow-hidden bg-white font-['Open_Sans','Noto_Sans',sans-serif] text-[12px] leading-4">
      <Header />
      <Ribbon />
      <FormulaBar />
      <Sheet />
      <TabBar />
      <StatusBar />
      <Taskbar />
    </div>
  );
}
